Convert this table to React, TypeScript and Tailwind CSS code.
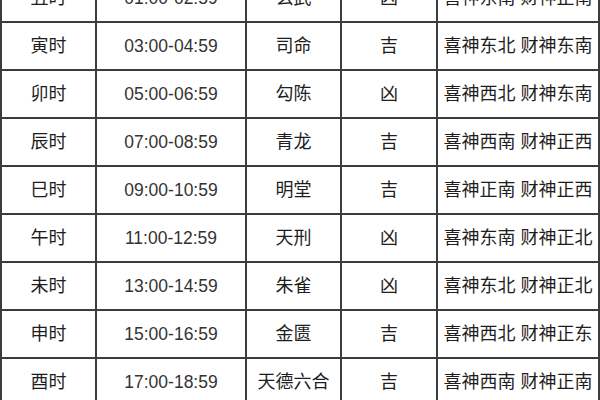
const rows = [
  { name: "丑时", time: "01:00-02:59", god: "玄武", luck: "凶", dir: "喜神东南 财神正南" },
  { name: "寅时", time: "03:00-04:59", god: "司命", luck: "吉", dir: "喜神东北 财神东南" },
  { name: "卯时", time: "05:00-06:59", god: "勾陈", luck: "凶", dir: "喜神西北 财神东南" },
  { name: "辰时", time: "07:00-08:59", god: "青龙", luck: "吉", dir: "喜神西南 财神正西" },
  { name: "巳时", time: "09:00-10:59", god: "明堂", luck: "吉", dir: "喜神正南 财神正西" },
  { name: "午时", time: "11:00-12:59", god: "天刑", luck: "凶", dir: "喜神东南 财神正北" },
  { name: "未时", time: "13:00-14:59", god: "朱雀", luck: "凶", dir: "喜神东北 财神正北" },
  { name: "申时", time: "15:00-16:59", god: "金匮", luck: "吉", dir: "喜神西北 财神正东" },
  { name: "酉时", time: "17:00-18:59", god: "天德六合", luck: "吉", dir: "喜神西南 财神正南" },
];

export default function App() {
  return (
    <div
      className="w-[600px] h-[400px] overflow-hidden bg-white text-[#1e1e1e]"
      style={{ fontFamily: '"Liberation Sans", "Noto Sans CJK SC", sans-serif' }}
    >
      {/* table scrolled so the first row is cut off at the top */}
      <div className="-mt-[25px] border-l-2 border-[#3c3c3c]">
        {rows.map((r) => (
          <div key={r.name} className="flex h-[48px] border-b-2 border-[#3c3c3c]">
            <div className="w-[95px] shrink-0 flex items-center justify-center border-r-2 border-[#3c3c3c] text-[18px]">
              {r.name}
            </div>
            <div className="w-[150px] shrink-0 flex items-center justify-center border-r-2 border-[#3c3c3c] text-[17.5px] text-[#333]">
              {r.time}
            </div>
            <div className="w-[95px] shrink-0 flex items-center justify-center border-r-2 border-[#3c3c3c] text-[18px] whitespace-nowrap">
              {r.god}
            </div>
            <div className="w-[96px] shrink-0 flex items-center justify-center border-r-2 border-[#3c3c3c] text-[18px]">
              {r.luck}
            </div>
            <div className="w-[162px] shrink-0 flex items-center justify-center border-r-2 border-[#3c3c3c] text-[18px] whitespace-nowrap">
              {r.dir}
            </div>
          </div>
        ))}
      </div>
    </div>
  );
}
